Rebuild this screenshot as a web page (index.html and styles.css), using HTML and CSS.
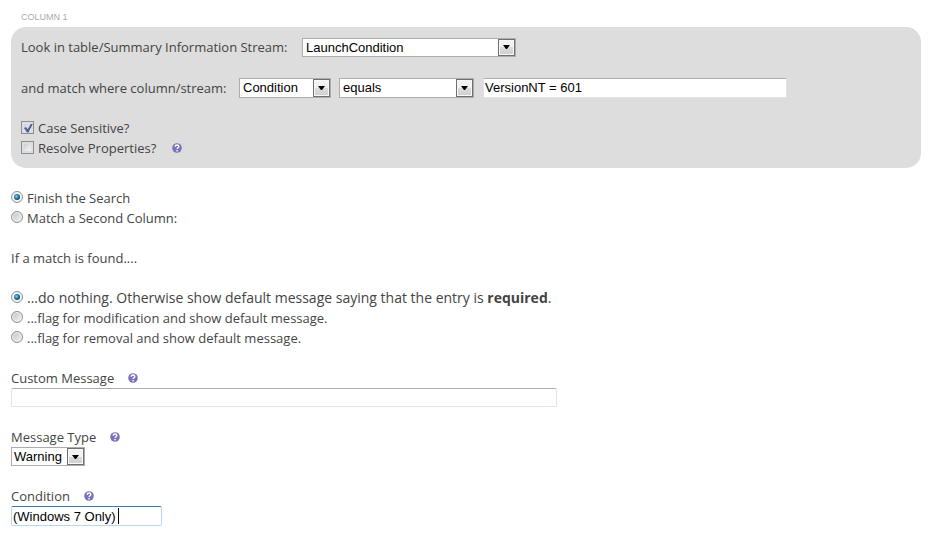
FILE: index.html
```html
<!DOCTYPE html>
<html lang="en">
<head>
<meta charset="utf-8">
<title>Search Condition</title>
<link rel="stylesheet" href="styles.css">
</head>
<body>
<svg class="symbols" aria-hidden="true">
  <symbol id="help" viewBox="0 0 10 10">
    <circle cx="5" cy="5" r="4.8" fill="#7774bd"/>
    <path d="M3.2 3.7C3.2 2.5 4 2 5 2s1.8.6 1.8 1.5C6.8 4.7 5.1 4.8 5.1 6" fill="none" stroke="#fff" stroke-width="1.4"/>
    <rect x="4.3" y="7" width="1.5" height="1.4" fill="#fff"/>
  </symbol>
  <symbol id="arrow" viewBox="0 0 7 4">
    <path d="M0 0h7L4 4H3z" fill="#000"/>
  </symbol>
</svg>
<form>
  <h2 class="caption">COLUMN 1</h2>
  <section class="panel">
    <div class="row">
      <label class="table-label" for="table">Look in table/Summary Information Stream:</label>
      <span class="select select-table"><select id="table"><option>LaunchCondition</option></select><span class="drop"><svg><use href="#arrow"/></svg></span></span>
    </div>
    <div class="row">
      <label class="column-label" for="column">and match where column/stream:</label>
      <span class="select select-column"><select id="column"><option>Condition</option></select><span class="drop"><svg><use href="#arrow"/></svg></span></span>
      <span class="select select-operator"><select aria-label="Comparison"><option>equals</option></select><span class="drop"><svg><use href="#arrow"/></svg></span></span>
      <input class="text value" type="text" aria-label="Value" value="VersionNT = 601">
    </div>
    <div class="group">
      <div class="option"><input id="case" type="checkbox" checked><label for="case">Case Sensitive?</label></div>
      <div class="option"><input id="resolve" type="checkbox"><label for="resolve">Resolve Properties?</label><svg class="help"><use href="#help"/></svg></div>
    </div>
  </section>

  <div class="group">
    <div class="option"><input id="finish" type="radio" name="next" checked><label for="finish">Finish the Search</label></div>
    <div class="option"><input id="second" type="radio" name="next"><label for="second">Match a Second Column:</label></div>
  </div>

  <p class="group">If a match is found....</p>

  <div class="group">
    <div class="option large"><input id="nothing" type="radio" name="action" checked><label for="nothing">...do nothing. Otherwise show default message saying that the entry is <b>required</b>.</label></div>
    <div class="option"><input id="modify" type="radio" name="action"><label for="modify">...flag for modification and show default message.</label></div>
    <div class="option"><input id="remove" type="radio" name="action"><label for="remove">...flag for removal and show default message.</label></div>
  </div>

  <div class="group">
    <div class="title"><label for="message">Custom Message</label><svg class="help"><use href="#help"/></svg></div>
    <input class="text message" id="message" type="text">
  </div>
  <div class="group">
    <div class="title"><label for="type">Message Type</label><svg class="help"><use href="#help"/></svg></div>
    <span class="select select-type"><select id="type"><option>Warning</option></select><span class="drop"><svg><use href="#arrow"/></svg></span></span>
  </div>
  <div class="group">
    <div class="title"><label for="condition">Condition</label><svg class="help"><use href="#help"/></svg></div>
    <span class="active"><input class="text" id="condition" type="text" value="(Windows 7 Only)"><span class="caret"></span></span>
  </div>
</form>
</body>
</html>
```

FILE: styles.css
```css
* { box-sizing: border-box; }
body {
  margin: 0;
  padding: 11px 12px 12px 11px;
  background: #fff;
  color: #444;
  font: 13px/20px "Trebuchet MS", "Open Sans", sans-serif;
}
.symbols { position: absolute; width: 0; height: 0; }
.caption {
  margin: 0 0 4px 10px;
  color: #aaa;
  font: 9px/12px "Liberation Sans", sans-serif;
}
.panel {
  padding: 10px;
  border-radius: 15px;
  background: #ddd;
}
.row { display: flex; align-items: center; min-height: 20px; gap: 4px; }
.row + .row { min-height: 21px; margin-top: 20px; }
.table-label { min-width: 277px; }
.column-label { min-width: 214px; }
.group { margin: 20px 0 0; }
.option { display: flex; align-items: center; height: 20px; gap: 4px; }
.title { display: flex; align-items: center; height: 20px; }
.help { width: 10px; height: 10px; margin-left: 14px; }
.option .help { margin-left: 12px; }
.large { font-size: 14px; }

input, select { font: 13px/15px "Liberation Sans", Arial, sans-serif; color: #000; }

.select { position: relative; display: block; height: 19px; }
.row + .row .select { height: 20px; }
.select select {
  display: block;
  width: 100%;
  height: 100%;
  padding: 0 20px 0 3px;
  border: 1px solid #abadb3;
  border-radius: 0;
  background: #fff;
  appearance: none;
}
.drop {
  position: absolute;
  top: 1px;
  right: 1px;
  bottom: 1px;
  width: 17px;
  display: grid;
  place-items: center;
  border: 1px solid #707070;
  background: linear-gradient(#f2f2f2 50%, #dcdcdc 50%, #cfcfcf);
  box-shadow: inset 0 0 0 1px #f8f8f8;
  pointer-events: none;
}
.drop svg { width: 7px; height: 4px; }
.select-table { width: 214px; }
.select-column { width: 92px; }
.select-operator { width: 135px; margin-left: 4px; }
.select-type { width: 74px; }
.select-type select { padding-left: 2px; }

.text {
  display: block;
  height: 20px;
  padding: 0 1px;
  border: 1px solid #e2e3ea;
  border-top-color: #abadb3;
  border-radius: 2px;
  outline: 0;
  background: #fff;
}
.value { width: 304px; margin-left: 5px; }
.message { width: 546px; height: 19px; }
.active { position: relative; display: block; width: 151px; }
.active .text { width: 100%; border-color: #b7d9ed; border-top-color: #3d7bad; }
.caret { position: absolute; left: 107px; top: 2px; width: 1px; height: 16px; background: #000; }

[type="checkbox"], [type="radio"] {
  display: grid;
  place-items: center;
  flex: none;
  margin: 0 0 2px;
  appearance: none;
}
[type="checkbox"] {
  width: 13px;
  height: 13px;
  border: 1px solid #8e8f8f;
  background: linear-gradient(135deg, #cbcfd5, #f6f6f6) content-box #f4f4f4;
  padding: 2px;
}
[type="checkbox"]:checked::before {
  content: "";
  width: 9px;
  height: 9px;
  background: #4b5f9b;
  clip-path: polygon(0 50%, 22% 38%, 40% 64%, 78% 0, 100% 0, 50% 100%, 34% 100%);
}
[type="radio"] {
  width: 12px;
  height: 12px;
  border: 1px solid #8e8f8f;
  border-radius: 50%;
  background: linear-gradient(135deg, #bfc3c8, #f4f4f4);
  box-shadow: inset 0 0 0 1px #f4f4f4;
}
[type="radio"]:checked { background: #f4f4f4; }
[type="radio"]:checked::before {
  content: "";
  width: 6px;
  height: 6px;
  border-radius: 50%;
  background: radial-gradient(circle at 40% 40%, #8ad8f5, #1f7fb5 40%, #12344f 80%);
}
```
